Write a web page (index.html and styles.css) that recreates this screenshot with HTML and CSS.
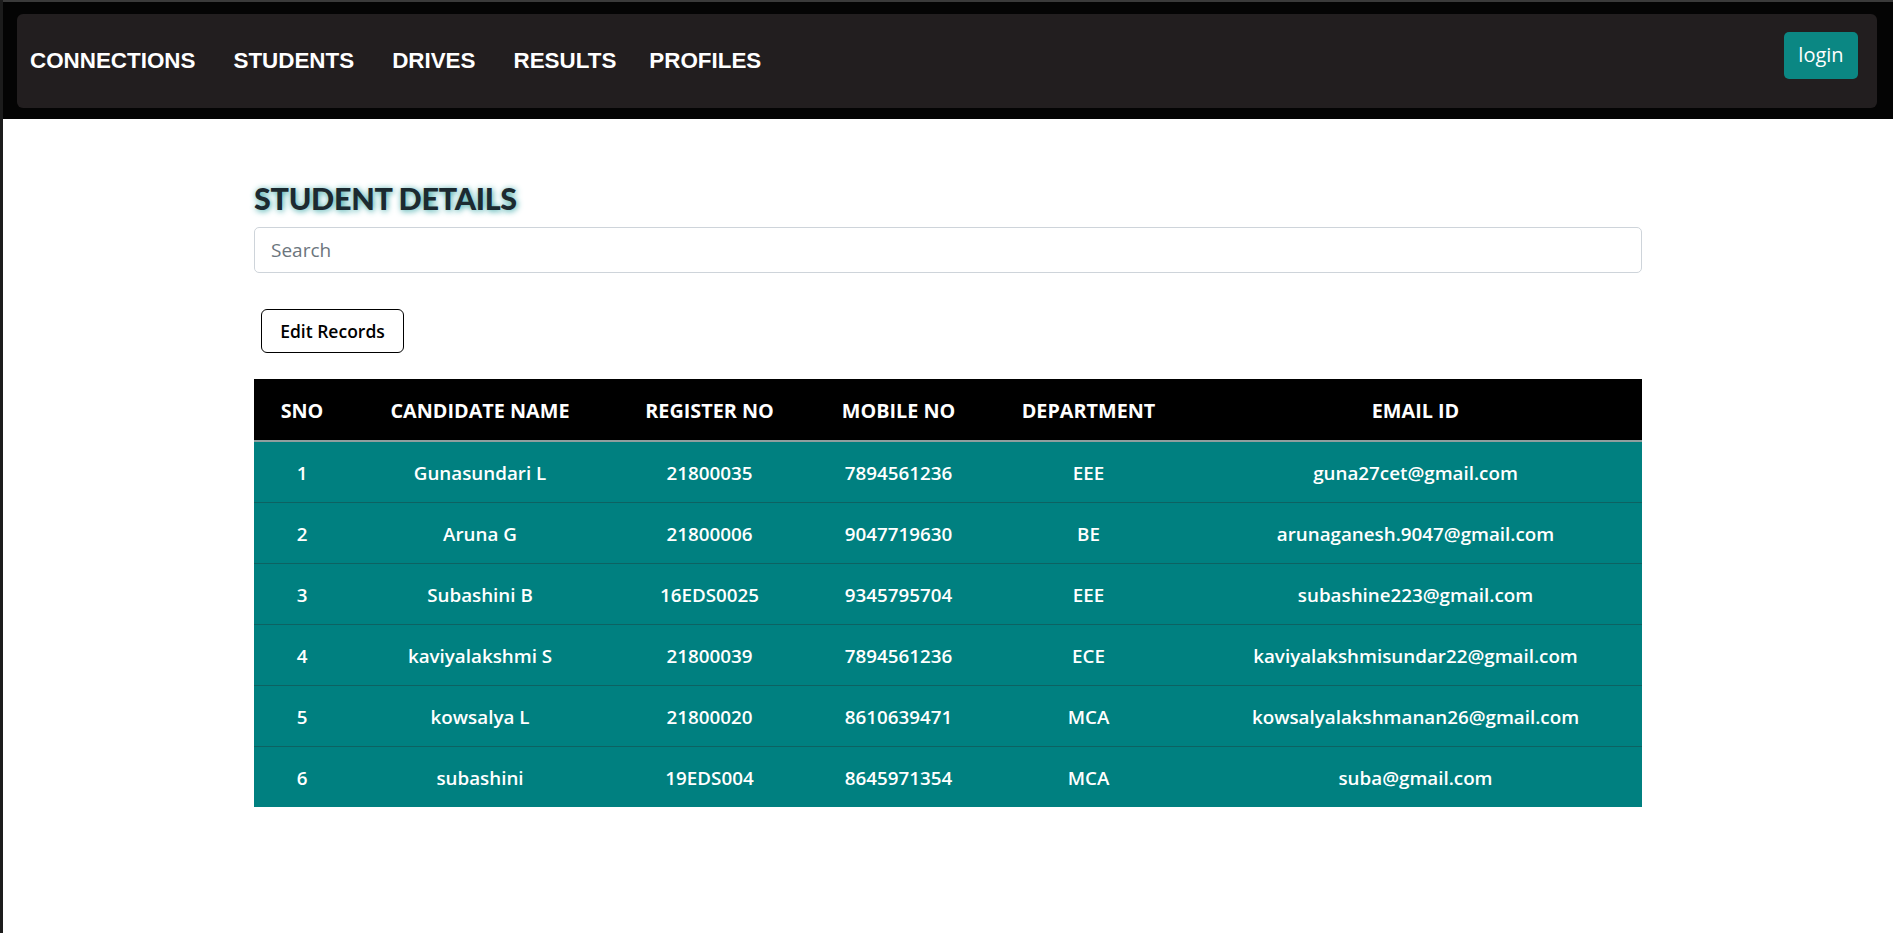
FILE: index.html
```html
<!DOCTYPE html>
<html lang="en">
<head>
<meta charset="utf-8">
<title>Student Details</title>
<link rel="stylesheet" href="styles.css">
</head>
<body>
<div class="frame">
  <header class="topbar">
    <nav class="navpanel">
      <ul class="navlinks">
        <li><a href="#">CONNECTIONS</a></li>
        <li><a href="#">STUDENTS</a></li>
        <li><a href="#">DRIVES</a></li>
        <li><a href="#">RESULTS</a></li>
        <li><a href="#">PROFILES</a></li>
      </ul>
      <button class="login-btn" type="button">login</button>
    </nav>
  </header>
  <main class="content">
    <h2 class="page-title">STUDENT DETAILS</h2>
    <input class="search" type="text" placeholder="Search">
    <button class="edit-btn" type="button">Edit Records</button>
    <table class="students">
      <colgroup>
        <col class="c-sno"><col class="c-name"><col class="c-reg"><col class="c-mob"><col class="c-dept"><col class="c-mail">
      </colgroup>
      <thead>
        <tr><th>SNO</th><th>CANDIDATE NAME</th><th>REGISTER NO</th><th>MOBILE NO</th><th>DEPARTMENT</th><th>EMAIL ID</th></tr>
      </thead>
      <tbody>
        <tr><td>1</td><td>Gunasundari L</td><td>21800035</td><td>7894561236</td><td>EEE</td><td>guna27cet@gmail.com</td></tr>
        <tr><td>2</td><td>Aruna G</td><td>21800006</td><td>9047719630</td><td>BE</td><td>arunaganesh.9047@gmail.com</td></tr>
        <tr><td>3</td><td>Subashini B</td><td>16EDS0025</td><td>9345795704</td><td>EEE</td><td>subashine223@gmail.com</td></tr>
        <tr><td>4</td><td>kaviyalakshmi S</td><td>21800039</td><td>7894561236</td><td>ECE</td><td>kaviyalakshmisundar22@gmail.com</td></tr>
        <tr><td>5</td><td>kowsalya L</td><td>21800020</td><td>8610639471</td><td>MCA</td><td>kowsalyalakshmanan26@gmail.com</td></tr>
        <tr><td>6</td><td>subashini</td><td>19EDS004</td><td>8645971354</td><td>MCA</td><td>suba@gmail.com</td></tr>
      </tbody>
    </table>
  </main>
</div>
</body>
</html>
```
FILE: styles.css
```css
* { box-sizing: border-box; }

html, body {
  margin: 0;
  padding: 0;
  background: #ffffff;
}

body {
  font-family: "Open Sans", "Noto Sans", sans-serif;
}

.frame {
  min-height: 100vh;
  border-left: 3px solid #1c1c1c;
}

.topbar {
  background: #040404;
  border-top: 2px solid #3a3a3a;
  padding: 12px 16px 11px 14px;
}

.navpanel {
  background: #221e1f;
  border-radius: 6px;
  height: 94px;
  display: flex;
  align-items: center;
  justify-content: space-between;
  padding: 0 19px 0 13px;
}

.navlinks {
  list-style: none;
  margin: 0;
  padding: 0;
  display: flex;
  gap: 38px;
}

.navlinks li:last-child { margin-left: -5px; }

.navlinks a {
  font-family: "Liberation Sans", Arial, sans-serif;
  font-weight: 700;
  font-size: 22.4px;
  color: #ffffff;
  text-decoration: none;
}

.login-btn {
  align-self: flex-start;
  margin-top: 18px;
  width: 74px;
  height: 47px;
  border: none;
  border-radius: 5px;
  background: #0b8783;
  color: #ffffff;
  font-family: "Open Sans", sans-serif;
  font-size: 20px;
  padding: 0 0 2px;
}

.content {
  width: 1388px;
  margin: 0 auto;
  padding-top: 60px;
  display: flex;
  flex-direction: column;
  align-items: flex-start;
}

.page-title {
  margin: 0;
  font-family: "Lato", "Open Sans", sans-serif;
  font-size: 30.5px;
  line-height: 38px;
  letter-spacing: -0.3px;
  font-weight: 900;
  color: #1c2a30;
  text-shadow: 1px 1px 6px #2fa3a3;
}

.search {
  margin-top: 10px;
  width: 100%;
  height: 46px;
  border: 1px solid #ced4da;
  border-radius: 5px;
  padding: 0 16px;
  font-family: "Open Sans", sans-serif;
  font-size: 19px;
  color: #212529;
}

.search::placeholder { color: #6c757d; }

.edit-btn {
  margin: 36px 0 0 7px;
  height: 44px;
  width: 143px;
  padding: 0;
  border: 1px solid #000;
  border-radius: 6px;
  background: #fff;
  color: #000;
  font-family: "Open Sans", sans-serif;
  font-weight: 600;
  font-size: 17.5px;
}

.students {
  margin-top: 26px;
  width: 100%;
  border-collapse: collapse;
  table-layout: fixed;
  font-family: "Open Sans", sans-serif;
  color: #fff;
  text-align: center;
}

.c-sno { width: 96px; }
.c-name { width: 260px; }
.c-reg { width: 199px; }
.c-mob { width: 179px; }
.c-dept { width: 201px; }
.c-mail { width: 453px; }

.students thead tr {
  background: #000;
  border-bottom: 2px solid #8e9e9e;
}

.students th {
  height: 62px;
  font-size: 19.8px;
  font-weight: 700;
  padding: 2px 4px 0;
}

.students tbody tr {
  background: #008080;
  border-bottom: 1px solid #0d6262;
}

.students tbody tr:last-child { border-bottom: none; }

.students td {
  height: 61px;
  font-size: 18.8px;
  font-weight: 600;
  padding: 2px 4px 0;
}
```
